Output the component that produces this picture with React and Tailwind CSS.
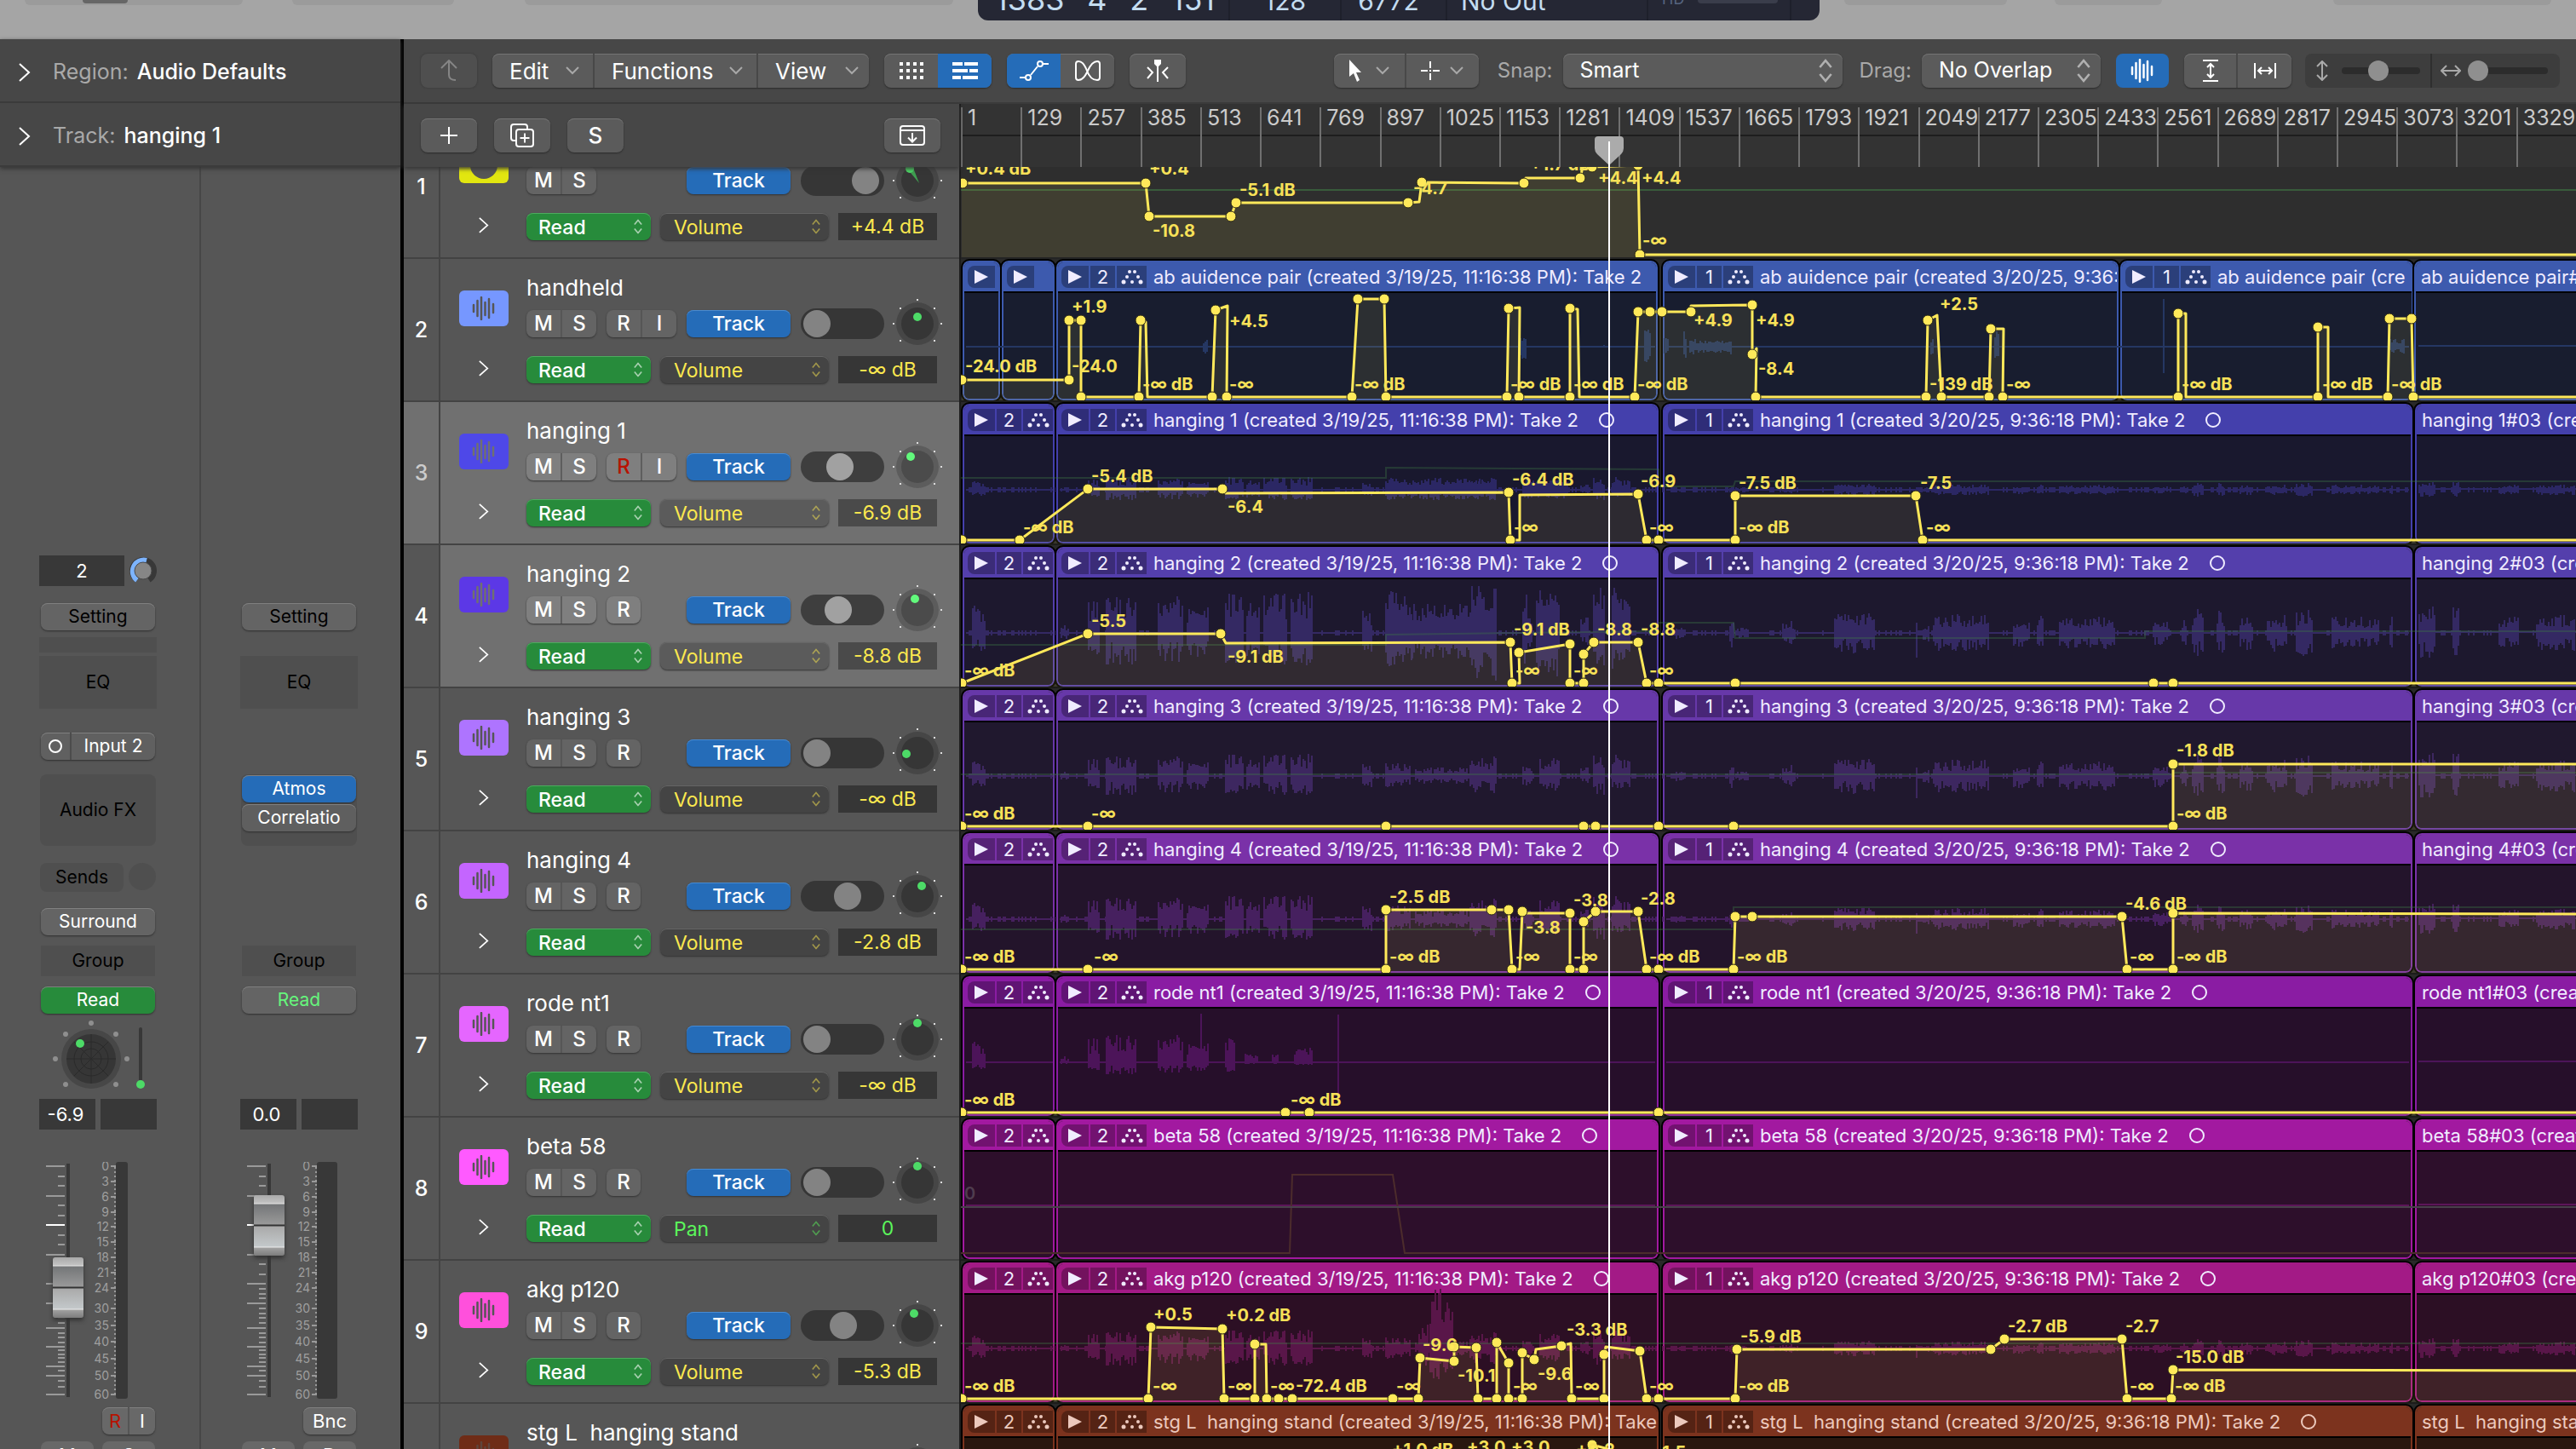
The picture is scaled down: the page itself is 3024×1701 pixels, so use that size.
import { useState } from "react";
import clsx from "clsx";

const RULER = Array.from({ length: 27 }, (_, i) => 1 + i * 128);

// [from, to, peak] of every passage that was played, in lane pixels
const BURSTS = [
  [14, 30, 0.7], [118, 128, 0.2], [150, 163, 0.8], [171, 206, 1], [232, 262, 0.9], [266, 292, 0.8],
  [311, 332, 1], [336, 352, 0.8], [356, 384, 1], [388, 414, 1.1], [472, 484, 0.6], [499, 528, 0.6],
  [534, 596, 0.4], [598, 629, 0.9], [660, 672, 0.5], [680, 704, 0.8], [728, 738, 0.4], [743, 757, 1],
  [765, 787, 1], [840, 852, 0.3], [903, 908, 0.8], [912, 926, 0.25], [965, 981, 0.6], [1026, 1074, 1],
  [1122, 1124, 1.4], [1130, 1138, 0.4], [1142, 1208, 0.9], [1236, 1256, 0.7], [1264, 1272, 1],
  [1290, 1355, 0.8], [1400, 1420, 0.6], [1434, 1440, 0.8], [1446, 1460, 1.2], [1475, 1484, 1.1],
  [1502, 1518, 0.9], [1534, 1558, 0.9], [1568, 1588, 1.2], [1610, 1666, 0.8], [1678, 1681, 0.8],
  [1712, 1732, 1.3], [1752, 1760, 1.5], [1806, 1830, 0.8], [1850, 1896, 0.9],
];

// points: [x, y] with a handle, [x, y, 0] without; labels: [x, baseline, text]
const TRACKS = [
  {
    num: 1, name: "", tile: "bg-[#e2e610]", icon: "master", buttons: "MS", fader: 95, pan: [-9, -14], wedge: true,
    param: "Volume", value: "+4.4 dB",
    points: [[2, 79], [217, 79], [221, 118], [317, 118], [323, 102], [525, 102], [538, 101, 0], [541, 78], [661, 79], [663, 73, 0], [727, 73], [730, 60, 0], [741, 60], [795, 58], [797, 163], [1896, 163, 0]],
    labels: [[5, 69, "+0.4 dB"], [221, 69, "+0.4"], [327, 94, "-5.1 dB"], [225, 142, "-10.8"], [531, 92, "-4.7"], [668, 64, "+1.7 dB"], [748, 80, "+4.4"], [799, 80, "+4.4"], [800, 153, "-∞"]],
    ghost: [[0, 87], [1896, 87]],
  },
  {
    num: 2, name: "handheld", tile: "bg-[#7697ff]", buttons: "MSRI", fader: 0, pan: [0, -8],
    param: "Volume", value: "-∞ dB",
    head: "bg-[#3d5aae]", edge: "border-[#3d5aae]", body: "bg-[#181d2f]", chip: "bg-[#2b3f7a]", wave: "#253763", scale: [0, 0, 0],
    title: "ab auidence pair",
    regions: [[2, 44, 0], [48, 62, 0], [112, 706, 2, "(created 3/19/25, 11:16:38 PM): Take 2"], [824, 535, 1, "(created 3/20/25, 9:36:18 PM): Take 2"], [1361, 344, 1, "(created 3/20/25, 9:36:18 PM): Take 2"], [1706, 220, 0, "#03 (created 3/20/25)"]],
    extra: [[285, 291, 8, 8], [657, 664, 12, 18], [755, 756, 3, 3], [803, 811, 26, 24], [826, 832, 12, 10], [849, 853, 20, 20], [856, 906, 9, 9], [1139, 1142, 10, 10], [1214, 1220, 24, 18], [1412, 1413, 56, 34], [1678, 1696, 10, 8]],
    points: [[1, 142], [127, 142], [127, 72], [141, 72], [141, 162], [209, 162], [211, 72], [217, 74, 0], [219, 162, 0], [295, 162], [299, 60], [313, 55, 0], [312, 162], [459, 162], [466, 47], [497, 47], [499, 162], [641, 162], [643, 58], [656, 57, 0], [655, 162], [715, 162], [715, 58], [724, 59, 0], [726, 162, 0], [791, 162], [795, 62], [809, 62], [823, 62], [857, 62], [857, 55, 0], [929, 54], [929, 112], [934, 105, 0], [933, 162], [1133, 162], [1135, 72], [1146, 66, 0], [1151, 162], [1207, 162], [1209, 82], [1224, 82, 0], [1223, 162], [1429, 162], [1429, 64], [1438, 64, 0], [1438, 162, 0], [1593, 162], [1593, 80], [1605, 80, 0], [1605, 162, 0], [1675, 162], [1677, 70], [1703, 70], [1705, 162], [1896, 162, 0]],
    labels: [[5, 133, "-24.0 dB"], [130, 63, "+1.9"], [130, 133, "-24.0"], [213, 154, "-∞ dB"], [315, 80, "+4.5"], [315, 154, "-∞"], [462, 154, "-∞ dB"], [645, 154, "-∞ dB"], [719, 154, "-∞ dB"], [794, 154, "-∞ dB"], [860, 79, "+4.9"], [933, 79, "+4.9"], [936, 136, "-8.4"], [1149, 60, "+2.5"], [1137, 154, "-139 dB"], [1227, 154, "-∞"], [1433, 154, "-∞ dB"], [1598, 154, "-∞ dB"], [1679, 154, "-∞ dB"]],
  },
  {
    num: 3, name: "hanging 1", tile: "bg-[#4e48e8]", buttons: "MSRI", armed: true, selected: true, focused: true, fader: 45, pan: [-8, -12],
    param: "Volume", value: "-6.9 dB",
    head: "bg-[#4440ac]", edge: "border-[#4440ac]", body: "bg-[#19182e]", chip: "bg-[#2f2d78]", wave: "#2b2764", scale: [15, 12, 7],
    extra: [[499, 628, 14, 12], [660, 714, 13, 10]],
    points: [[1, 162], [69, 162], [149, 102], [307, 102], [311, 107, 0], [643, 106], [645, 162], [656, 162, 0], [656, 109, 0], [795, 108], [805, 162], [819, 162], [909, 162], [909, 110], [1121, 110], [1129, 162], [1896, 162, 0]],
    labels: [[73, 154, "-∞ dB"], [153, 94, "-5.4 dB"], [313, 130, "-6.4"], [647, 98, "-6.4 dB"], [649, 154, "-∞"], [798, 100, "-6.9"], [808, 154, "-∞"], [913, 102, "-7.5 dB"], [913, 154, "-∞ dB"], [1126, 102, "-7.5"], [1133, 154, "-∞"]],
    ghost: [[0, 89], [499, 89], [499, 77], [819, 79], [819, 99], [907, 99], [909, 93], [1896, 93]],
  },
  {
    num: 4, name: "hanging 2", tile: "bg-[#5c38e6]", buttons: "MSR", selected: true, fader: 41, pan: [-3, -13],
    param: "Volume", value: "-8.8 dB",
    head: "bg-[#543fac]", edge: "border-[#543fac]", body: "bg-[#1d182e]", chip: "bg-[#3b2c78]", wave: "#342963", scale: [48, 38, 24],
    extra: [[499, 530, 50, 40], [530, 600, 34, 30], [600, 630, 58, 56], [660, 666, 50, 40], [676, 702, 54, 54], [743, 756, 56, 34], [765, 787, 58, 46]],
    points: [[1, 162], [149, 104], [305, 104], [311, 115, 0], [645, 114], [647, 162], [656, 162, 0], [655, 126], [715, 116], [715, 162], [731, 162], [731, 128], [743, 114], [795, 114], [805, 162], [819, 162], [909, 162], [1400, 162], [1423, 162], [1896, 162, 0]],
    labels: [[4, 154, "-∞ dB"], [153, 96, "-5.5"], [313, 138, "-9.1 dB"], [649, 106, "-9.1 dB"], [651, 154, "-∞"], [719, 154, "-∞"], [747, 106, "-8.8"], [798, 106, "-8.8"], [808, 154, "-∞"]],
    ghost: [[0, 117], [499, 117], [499, 105], [819, 101], [819, 91], [907, 91], [909, 109], [1390, 109], [1390, 101], [1896, 101]],
  },
  {
    num: 5, name: "hanging 3", tile: "bg-[#ae74ff]", buttons: "MSR", fader: 0, pan: [-13, 1],
    param: "Volume", value: "-∞ dB",
    head: "bg-[#6738a9]", edge: "border-[#6738a9]", body: "bg-[#20182e]", chip: "bg-[#482677]", wave: "#3d2760", scale: [26, 22, 21],
    points: [[1, 162], [149, 162], [499, 162], [731, 162], [745, 162], [819, 162], [907, 162], [1423, 162], [1423, 89], [1896, 89, 0]],
    labels: [[4, 154, "-∞ dB"], [153, 154, "-∞"], [1427, 80, "-1.8 dB"], [1427, 154, "-∞ dB"]],
    ghost: [[0, 101], [1423, 101], [1425, 99], [1896, 99]],
  },
  {
    num: 6, name: "hanging 4", tile: "bg-[#c465ff]", buttons: "MSR", fader: 60, pan: [5, -12],
    param: "Volume", value: "-2.8 dB",
    head: "bg-[#7a31a8]", edge: "border-[#7a31a8]", body: "bg-[#23142b]", chip: "bg-[#562276]", wave: "#46205f", scale: [28, 24, 14],
    points: [[1, 162], [149, 162], [499, 162], [499, 92], [623, 92], [643, 92], [647, 162], [656, 162, 0], [659, 94], [661, 96, 0], [715, 96], [715, 162], [731, 162], [731, 106], [745, 94], [795, 94], [805, 162], [819, 162], [907, 162], [909, 100], [929, 100], [1363, 100], [1369, 162], [1423, 162], [1423, 96], [1896, 97, 0]],
    labels: [[4, 154, "-∞ dB"], [156, 154, "-∞"], [503, 84, "-2.5 dB"], [503, 154, "-∞ dB"], [663, 120, "-3.8"], [651, 154, "-∞"], [719, 88, "-3.8"], [719, 154, "-∞"], [798, 86, "-2.8"], [808, 154, "-∞ dB"], [911, 154, "-∞ dB"], [1367, 92, "-4.6 dB"], [1372, 154, "-∞"], [1427, 154, "-∞ dB"]],
    ghost: [[0, 115], [907, 115], [907, 89], [1896, 89]],
  },
  {
    num: 7, name: "rode nt1", tile: "bg-[#e566ff]", buttons: "MSR", fader: 0, pan: [0, -19],
    param: "Volume", value: "-∞ dB",
    head: "bg-[#8a1ca3]", edge: "border-[#8a1ca3]", body: "bg-[#260f2a]", chip: "bg-[#601474]", wave: "#4c1459", scale: [36, 14, 0], until: 310,
    extra: [[282, 284, 62, 16], [311, 323, 30, 12], [334, 350, 10, 2], [366, 374, 10, 2], [392, 414, 18, 3], [443, 444, 62, 60]],
    points: [[1, 162], [381, 162], [409, 162], [819, 162], [1896, 162, 0]],
    labels: [[4, 154, "-∞ dB"], [387, 154, "-∞ dB"]],
  },
  {
    num: 8, name: "beta 58", tile: "bg-[#ff5aff]", buttons: "MSR", fader: 0, pan: [0, -19],
    param: "Pan", value: "0",
    head: "bg-[#a219a0]", edge: "border-[#a219a0]", body: "bg-[#2d0f2b]", chip: "bg-[#721270]", wave: "#5c1559", scale: [0, 0, 0],
    points: [], labels: [],
    dimValue: "0",
    dim: [[0, 159], [386, 159], [389, 67], [507, 67], [521, 159], [1896, 159]],
    ghost: [[0, 105], [1896, 105]],
  },
  {
    num: 9, name: "akg p120", tile: "bg-[#ff50dc]", buttons: "MSR", fader: 51, pan: [-4, -14],
    param: "Volume", value: "-5.3 dB",
    head: "bg-[#a31a86]", edge: "border-[#a31a86]", body: "bg-[#2c0f24]", chip: "bg-[#73125e]", wave: "#591649", scale: [22, 20, 9],
    extra: [[538, 550, 28, 20], [551, 578, 70, 36]],
    points: [[1, 162], [220, 162], [223, 78], [307, 80], [309, 162], [345, 162], [345, 98], [358, 98, 0], [359, 162], [373, 162], [389, 162], [507, 162], [537, 162], [539, 114], [579, 118], [579, 101], [605, 102], [607, 162], [629, 162], [629, 96], [643, 120], [643, 162], [659, 162], [659, 108], [673, 116], [675, 104, 0], [705, 100], [716, 97, 0], [717, 162], [755, 162], [755, 110], [757, 101, 0], [797, 106], [805, 162], [819, 162], [909, 162], [911, 104], [1209, 104], [1225, 92], [1363, 92], [1369, 162], [1421, 162], [1423, 128], [1896, 129, 0]],
    labels: [[4, 154, "-∞ dB"], [226, 70, "+0.5"], [225, 154, "-∞"], [311, 71, "+0.2 dB"], [313, 154, "-∞"], [363, 154, "-∞"], [393, 154, "-72.4 dB"], [511, 154, "-∞"], [542, 106, "-9.6"], [583, 142, "-10.1"], [648, 154, "-∞"], [677, 140, "-9.6"], [711, 88, "-3.3 dB"], [721, 154, "-∞"], [808, 154, "-∞"], [915, 96, "-5.9 dB"], [913, 154, "-∞ dB"], [1229, 84, "-2.7 dB"], [1367, 84, "-2.7"], [1372, 154, "-∞"], [1426, 120, "-15.0 dB"], [1425, 154, "-∞ dB"]],
    ghost: [[0, 97], [1896, 97]],
  },
  {
    num: 10, name: "stg L  hanging stand", tile: "bg-[#6f2c17]", buttons: "MSR", fader: 40, pan: [0, -14],
    param: "Volume", value: "-1.5 dB", muted: true,
    head: "bg-[#7c331e]", edge: "border-[#7c331e]", body: "bg-[#29170f]", chip: "bg-[#552314]", wave: "#4a2314", scale: [0, 0, 0],
    points: [[741, 48], [900, 90, 0]],
    labels: [[506, 61, "+1.0 dB"], [594, 58, "+3.0"], [646, 58, "+3.0"], [722, 61, "+0.2"], [814, 64, "-1.5"]],
  },
];

const REGIONS = [
  [2, 108, 2],
  [112, 707, 2, "(created 3/19/25, 11:16:38 PM): Take 2"],
  [824, 880, 1, "(created 3/20/25, 9:36:18 PM): Take 2"],
  [1707, 220, 0, "#03 (created 3/20/25)"],
];

const noise = (n) => {
  const v = Math.sin(n * 12.9898) * 43758.5453;
  return v - Math.floor(v);
};

const barPath = (track) => {
  let d = "";
  const bar = (x, up, down) => {
    d += `M${x} ${Math.round(103 - up)}V${Math.round(103 + down)}`;
  };
  const [up, down, late] = track.scale;
  BURSTS.forEach(([from, to, peak]) => {
    if (!up || (track.until && from > track.until)) return;
    for (let x = from; x < to; x += 2) {
      const a = from > 819 ? late : up;
      const b = from > 819 ? late : down;
      bar(x, a * peak * (0.3 + 0.7 * noise(x)), b * peak * (0.3 + 0.7 * noise(x + 7)));
    }
  });
  (track.extra || []).forEach(([from, to, a, b]) => {
    for (let x = from; x < to; x += 2) {
      bar(x, a * (0.4 + 0.6 * noise(x + 3)), b * (0.4 + 0.6 * noise(x + 5)));
    }
  });
  if (up && !track.until) {
    for (let x = 6; x < 1890; x += 2) if (noise(x * 3) > 0.7) bar(x, 3, 3);
  }
  return d;
};

const line = (pts) => pts.map(([x, y], i) => `${i ? "L" : "M"}${x} ${y}`).join("");

const btn = "rounded-lg bg-[#5b5b5b] shadow-[inset_0_1px_0_#747474,0_1px_2px_#2b2b2b]";

const UpDown = ({ className }) => (
  <svg viewBox="0 0 12 22" className={clsx("pointer-events-none absolute top-1/2 -translate-y-1/2", className)} fill="none" stroke="currentColor" strokeWidth="2">
    <path d="M1 8l5-6 5 6M1 14l5 6 5-6" />
  </svg>
);

const Down = () => (
  <svg viewBox="0 0 16 10" className="w-4 text-[#a8a8a8]" fill="none" stroke="currentColor" strokeWidth="2">
    <path d="M1 1l7 7 7-7" />
  </svg>
);

const Chevron = ({ className }) => (
  <svg viewBox="0 0 14 22" className={className} fill="none" stroke="currentColor" strokeWidth="2">
    <path d="M1 1l11 10L1 21" />
  </svg>
);

const WaveIcon = ({ className }) => (
  <svg viewBox="0 0 28 28" className={className} stroke="currentColor" strokeWidth="2.500" strokeLinecap="round">
    <path d="M2 10v8M6.500 5v18M11 1v26M15.500 7v15M20 3v22M25 9v10" />
  </svg>
);

const TopBar = () => (
  <div className="relative h-[46px] shrink-0 bg-[#a5a5a5]">
    <div className="flex h-6 items-start pl-[29px] pr-[29px]">
      <div className="h-[6px] w-[256px] rounded-b-lg bg-[#9b9b9b]">
        <div className="ml-[68px] h-1 w-[53px] rounded-b-md bg-[#666]" />
      </div>
      <div className="ml-[58px] h-[6px] w-[190px] rounded-b-lg bg-[#9b9b9b]" />
      <div className="ml-[83px] h-[6px] w-[503px] rounded-b-lg bg-[#9b9b9b]" />
      <div className="ml-[29px] flex h-6 w-[988px] items-end overflow-hidden rounded-b-xl bg-[#252734] text-[30px] leading-[30px] text-[#c3dcf0]">
        <div className="flex w-[296px] shrink-0 items-end justify-between border-r-2 border-[#1e202b] pb-2.5 pl-5 pr-4 text-4xl leading-[30px]">
          <span>1383</span>
          <span>4</span>
          <span>2</span>
          <span>151</span>
        </div>
        <div className="w-[131px] shrink-0 border-r-2 border-[#1e202b] pb-2 text-center">128</div>
        <div className="w-[124px] shrink-0 border-r-2 border-[#1e202b] pb-2 pr-3 text-center">6772</div>
        <div className="w-[236px] shrink-0 border-r-2 border-[#1e202b] pb-2 pl-4">No Out</div>
        <div className="flex w-[168px] shrink-0 items-end gap-4 border-r-2 border-[#1e202b] pb-[15px] pl-4 text-lg leading-5 text-[#566580]">
          <span>HD</span>
          <span className="mb-[5px] h-4 w-[94px] rounded-b bg-[#3a3d4b]" />
        </div>
      </div>
      <div className="ml-[29px] h-[6px] w-[191px] rounded-b-lg bg-[#9b9b9b]" />
      <div className="ml-[56px] h-[6px] w-[126px] rounded-b-lg bg-[#9b9b9b]" />
      <div className="ml-auto h-[6px] w-[256px] rounded-b-lg bg-[#9b9b9b]" />
    </div>
  </div>
);

const stripBtn = "h-8 w-[134px] rounded-lg text-[21px] leading-8 shadow-[inset_0_1px_0_#808080,0_1px_2px_#303030]";
const slot = "flex items-center justify-center bg-[#4f4f4f] text-[21px] text-black";

const LONG_TICKS = [5, 40, 109, 143, 166, 195, 217, 240, 251, 273];
const SHORT_TICKS = [17, 28, 51, 63, 86, 97, 120, 132, 149, 155, 160, 172, 178, 183, 189, 201, 206, 212, 221, 226, 230, 235, 245, 257, 264];
const SCALE = [[0, 5], [3, 23], [6, 41], [9, 59], [12, 76], [15, 94], [18, 112], [21, 130], [24, 148], [30, 172], [35, 192], [40, 211], [45, 231], [50, 251], [60, 273]];

const Fader = ({ value, meter, label }) => (
  <div className="relative h-[278px] w-[138px]">
    <svg viewBox="0 0 138 278" className="h-full w-full" fill="none" stroke="#9a9a9a" strokeWidth="2">
      <path d={LONG_TICKS.map((y) => `M8 ${y}H30`).join("") + SHORT_TICKS.map((y) => `M22 ${y}H30`).join("")} />
      <path d="M8 74H30" stroke="#fff" />
      <path d={SCALE.map(([, y]) => `M84 ${y}H90`).join("")} />
      <path d="M89 6V273" strokeDasharray="2 3" />
      <path d="M34 2V276" stroke="#383838" strokeWidth="4" />
      <rect x="90" y="0" width={meter} height="278" rx="3" fill="#383838" stroke="none" />
      {SCALE.map(([n, y]) => (
        <text key={n} x="82" y={y + 5} textAnchor="end" fill="#9f9f9f" stroke="none" fontSize="14">
          {n}
        </text>
      ))}
    </svg>
    <input
      type="range"
      aria-label={label}
      defaultValue={value}
      className="absolute left-4 top-0 h-[278px] w-9 appearance-none bg-transparent [direction:rtl] [writing-mode:vertical-lr] [&::-webkit-slider-thumb]:h-[71px] [&::-webkit-slider-thumb]:w-9 [&::-webkit-slider-thumb]:appearance-none [&::-webkit-slider-thumb]:rounded-[3px] [&::-webkit-slider-thumb]:bg-[linear-gradient(#a9a9a9_0,#c2c2c2_9px,#e6e6e6_10px,#747678_11px,#999_34px,#333_35px,#333_36px,#aaa_37px,#c3c8ca_60px,#eee_61px,#a0a0a0_62px,#7c7c7c_71px)] [&::-webkit-slider-thumb]:shadow-[0_3px_5px_#333]"
    />
  </div>
);

const ValueBoxes = ({ value, label }) => (
  <div className="mt-3 flex w-[138px] justify-between">
    <input aria-label={label} defaultValue={value} className="h-9 w-[66px] bg-[#383838] pr-1 text-center text-[22px] text-white" />
    <div className="h-9 w-[66px] bg-[#383838]" />
  </div>
);

const Inspector = () => (
  <aside className="flex w-[474px] shrink-0 flex-col border-r-4 border-black bg-[#565656]">
    <div className="relative z-10 shrink-0 bg-[#474747] shadow-[0_2px_5px_#333]">
      {[["Region:", "Audio Defaults"], ["Track:", "hanging 1"]].map(([k, v]) => (
        <div key={k} className="flex h-[75px] items-center gap-2.5 border-b-2 border-[#3b3b3b] pl-[22px] pt-1 text-[25px] text-white">
          <button type="button" aria-label={k} className="mr-4">
            <Chevron className="w-3.5" />
          </button>
          <span className="text-[#a9a9a9]">{k}</span>
          <span className="font-medium">{v}</span>
        </div>
      ))}
    </div>
    <div className="flex min-h-0 flex-1 overflow-hidden">
      <div className="flex w-[236px] flex-col items-center border-r-2 border-[#474747] pr-1 pt-[456px] *:shrink-0">
        <div className="flex w-[138px] items-center justify-between">
          <input aria-label="Channel" defaultValue="2" className="h-9 w-[100px] bg-[#383838] text-center text-[22px] text-white" />
          <svg viewBox="0 0 32 32" className="w-8" fill="none">
            <path d="M9 27A13 13 0 1 1 23 27" stroke="#383838" strokeWidth="6" />
            <path d="M9 27A13 13 0 0 1 20 4" stroke="#7db4ff" strokeWidth="6" />
            <circle cx="16" cy="16" r="10" fill="#868686" stroke="#4a4a4a" />
          </svg>
        </div>
        <button type="button" className={clsx(stripBtn, "mt-5 bg-[#646464] text-black")}>Setting</button>
        <div className="mt-2 h-[18px] w-[138px] bg-[#4f4f4f]" />
        <div className={clsx(slot, "mt-1 h-[62px] w-[138px]")}>EQ</div>
        <div className={clsx(stripBtn, "mt-7 flex items-center bg-[#606060] text-white")}>
          <button type="button" aria-label="Input format" className="flex h-8 w-9 items-center justify-center border-r-2 border-[#4c4c4c]">
            <span className="h-4 w-4 rounded-full border-2 border-white" />
          </button>
          <button type="button" className="flex-1">Input 2</button>
        </div>
        <div className={clsx(slot, "mt-[17px] h-[84px] w-[136px] rounded-lg")}>Audio FX</div>
        <div className="mt-5 flex h-[34px] w-[136px] justify-between">
          <div className={clsx(slot, "w-[98px] rounded-lg")}>Sends</div>
          <div className="h-8 w-8 rounded-full bg-[#4f4f4f]" />
        </div>
        <button type="button" className={clsx(stripBtn, "mt-[19px] bg-[#646464] text-white")}>Surround</button>
        <div className={clsx(slot, "mt-3 h-9 w-[134px]")}>Group</div>
        <button type="button" className={clsx(stripBtn, "mt-3 bg-[#278b3b] text-white")}>Read</button>
        <svg viewBox="0 0 138 88" className="h-[88px] w-[138px]" fill="none">
          {[[61, 11], [31, 24], [90, 24], [19, 53], [103, 53], [31, 83], [90, 83]].map(([x, y]) => (
            <circle key={`${x}-${y}`} cx={x} cy={y} r="3" fill="#8f8f8f" />
          ))}
          <circle cx="61" cy="53" r="35" fill="#474747" />
          <circle cx="61" cy="53" r="29" fill="#363636" />
          <path d="M32 53H90M61 24V82M41 33L81 73M81 33L41 73" stroke="#2a2a2a" />
          <circle cx="61" cy="53" r="20" stroke="#2a2a2a" />
          <circle cx="61" cy="53" r="12" stroke="#2a2a2a" />
          <circle cx="48" cy="35" r="5" fill="#4ddb67" />
          <path d="M119 18V82" stroke="#383838" strokeWidth="4" strokeLinecap="round" />
          <circle cx="119" cy="83" r="5" fill="#4ddb67" />
        </svg>
        <ValueBoxes value="-6.9" label="Level" />
        <div className="mt-[38px]">
          <Fader value={46} meter={14} label="Track level" />
        </div>
        <div className="mt-2.5 flex w-[134px] justify-end">
          <div className="flex h-8 w-[62px] rounded-lg bg-[#686868] text-[22px] shadow-[inset_0_1px_0_#808080,0_1px_2px_#303030]">
            <button type="button" className="flex-1 border-r-2 border-[#555] text-[#b81200]">R</button>
            <button type="button" className="flex-1 text-white">I</button>
          </div>
        </div>
        <div className="mt-2 flex w-[134px] justify-between text-[22px] text-white">
          <button type="button" className="h-8 w-[62px] rounded-lg bg-[#686868]">M</button>
          <button type="button" className="h-8 w-[62px] rounded-lg bg-[#686868]">S</button>
        </div>
      </div>

      <div className="flex flex-1 flex-col items-center pr-1 pt-[512px] *:shrink-0">
        <button type="button" className={clsx(stripBtn, "bg-[#646464] text-black")}>Setting</button>
        <div className={clsx(slot, "mt-[30px] h-[62px] w-[138px]")}>EQ</div>
        <div className="mt-[77px] flex h-[84px] w-[136px] flex-col items-center gap-0.5 rounded-lg bg-[#4f4f4f] pt-px">
          <button type="button" className={clsx(stripBtn, "bg-[#256cb8] text-white")}>Atmos</button>
          <button type="button" className={clsx(stripBtn, "bg-[#5f5f5f] text-white")}>Correlatio</button>
        </div>
        <div className={clsx(slot, "mt-[117px] h-9 w-[134px]")}>Group</div>
        <button type="button" className={clsx(stripBtn, "mt-3 bg-[#646464] text-[#66f57c]")}>Read</button>
        <div className="mt-[88px]">
          <ValueBoxes value="0.0" label="Output level" />
        </div>
        <div className="mt-[38px]">
          <Fader value={81} meter={24} label="Output fader" />
        </div>
        <div className="mt-2.5 flex w-[134px] justify-end">
          <button type="button" className="h-8 w-[62px] rounded-lg bg-[#686868] text-[22px] leading-8 text-white shadow-[inset_0_1px_0_#808080,0_1px_2px_#303030]">Bnc</button>
        </div>
        <div className="mt-2 flex w-[134px] justify-between text-[22px] text-white">
          <button type="button" className="h-8 w-[62px] rounded-lg bg-[#686868]">M</button>
          <button type="button" className="h-8 w-[62px] rounded-lg bg-[#686868]">D</button>
        </div>
      </div>
    </div>
  </aside>
);

const zoomSlider =
  "h-2 appearance-none rounded-full bg-[#2c2c2c] [&::-webkit-slider-thumb]:h-6 [&::-webkit-slider-thumb]:w-6 [&::-webkit-slider-thumb]:appearance-none [&::-webkit-slider-thumb]:rounded-full [&::-webkit-slider-thumb]:bg-[#8f8f8f]";

const Toolbar = () => {
  const [view, setView] = useState("tracks");

  return (
    <div className="flex h-[76px] shrink-0 items-center border-b-2 border-[#3b3b3b] bg-[#474747] pl-5 pr-[19px] text-[26px] text-white">
      <button type="button" aria-label="Up" className="flex h-10 w-[66px] items-center justify-center rounded-lg bg-[#4f4f4f] text-[#858585] shadow-[0_0_2px_#333]">
        <svg viewBox="0 0 22 26" className="w-[22px]" fill="none" stroke="currentColor" strokeWidth="2">
          <path d="M2 10l9-9 9 9M11 1v17q0 6 8 6" />
        </svg>
      </button>
      <div className={clsx(btn, "ml-[18px] flex h-10 divide-x-2 divide-[#484848]")}>
        <button type="button" className="flex w-[120px] items-center justify-between pl-5 pr-4">Edit<Down /></button>
        <button type="button" className="flex w-[192px] items-center justify-between pl-5 pr-4">Functions<Down /></button>
        <button type="button" className="flex w-[130px] items-center justify-between pl-5 pr-3">View<Down /></button>
      </div>
      <div className={clsx(btn, "ml-[18px] flex h-10 overflow-hidden")}>
        <button type="button" aria-label="Grid" onClick={() => setView("grid")} className={clsx("flex w-[63px] items-center justify-center", view === "grid" && "bg-[#256cb8]")}>
          <svg viewBox="0 0 28 20" className="w-7" fill="currentColor">
            {[0, 8, 16].map((y) => [0, 8, 16, 24].map((x) => <rect key={`${x}-${y}`} x={x} y={y} width="4" height="4" />))}
          </svg>
        </button>
        <button type="button" aria-label="Tracks" onClick={() => setView("tracks")} className={clsx("flex w-[63px] items-center justify-center", view === "tracks" && "bg-[#256cb8]")}>
          <svg viewBox="0 0 30 20" className="w-[30px]" stroke="currentColor" strokeWidth="4">
            <path d="M0 2H12M14 2H30M0 10H18M20 10H30M0 18H10M12 18H30" />
          </svg>
        </button>
      </div>
      <div className={clsx(btn, "ml-[18px] flex h-10 overflow-hidden")}>
        <button type="button" aria-label="Automation" className="flex w-[63px] items-center justify-center bg-[#256cb8]">
          <svg viewBox="0 0 34 24" className="w-[34px]" fill="none" stroke="currentColor" strokeWidth="2">
            <path d="M0 20H7M13 17L21 7M27 4H34" />
            <circle cx="10" cy="20" r="3" />
            <circle cx="24" cy="4" r="3" />
          </svg>
        </button>
        <button type="button" aria-label="Flex" className="flex w-[63px] items-center justify-center">
          <svg viewBox="0 0 30 24" className="w-[30px]" fill="none" stroke="currentColor" strokeWidth="2">
            <path d="M1 4Q1 1 4 1Q10 1 14 12T26 23Q29 23 29 20V4Q29 1 26 1Q20 1 15 12T4 23Q1 23 1 20Z" />
          </svg>
        </button>
      </div>
      <button type="button" aria-label="Catch" className={clsx(btn, "ml-[18px] flex h-10 w-[66px] items-center justify-center")}>
        <svg viewBox="0 0 26 26" className="w-[26px]" fill="none" stroke="currentColor" strokeWidth="2">
          <path d="M9 0h8v5l-4 4-4-4z" fill="currentColor" stroke="none" />
          <path d="M13 6V26M1 9l6 6-6 7M25 9l-6 6 6 7" />
        </svg>
      </button>

      <div className={clsx(btn, "ml-auto flex h-10 divide-x-2 divide-[#484848]")}>
        <button type="button" aria-label="Pointer" className="flex w-[85px] items-center justify-center gap-4">
          <svg viewBox="0 0 16 26" className="w-4" fill="currentColor">
            <path d="M1 0L15 15H9L13 24L10 26L6 16L1 20Z" />
          </svg>
          <Down />
        </button>
        <button type="button" aria-label="Marquee" className="flex w-[85px] items-center justify-center gap-3">
          <svg viewBox="0 0 22 22" className="w-[22px]" stroke="currentColor" strokeWidth="2">
            <path d="M11 0V8M11 10V12M11 14V22M0 11H8M14 11H22" />
          </svg>
          <Down />
        </button>
      </div>
      <label htmlFor="snap" className="ml-[22px] mr-3 text-2xl text-[#a9a9a9]">Snap:</label>
      <div className="relative w-[328px]">
        <select id="snap" className={clsx(btn, "block h-10 w-full appearance-none px-5 text-[25px]")}>
          <option>Smart</option>
        </select>
        <UpDown className="right-3 w-4 text-[#b0b0b0]" />
      </div>
      <label htmlFor="drag" className="ml-5 mr-3 text-2xl text-[#a9a9a9]">Drag:</label>
      <div className="relative w-[210px]">
        <select id="drag" className={clsx(btn, "block h-10 w-full appearance-none px-5 text-[25px]")}>
          <option>No Overlap</option>
        </select>
        <UpDown className="right-3 w-4 text-[#b0b0b0]" />
      </div>
      <button type="button" aria-label="Waveform zoom" className="ml-[18px] flex h-10 w-[62px] items-center justify-center rounded-lg bg-[#256cb8]">
        <WaveIcon className="w-7" />
      </button>
      <div className={clsx(btn, "ml-[18px] flex h-10 divide-x-2 divide-[#484848]")}>
        <button type="button" aria-label="Fit vertically" className="flex w-[63px] items-center justify-center">
          <svg viewBox="0 0 20 26" className="w-5" fill="none" stroke="currentColor" strokeWidth="2">
            <path d="M1 1H19M1 25H19M10 5V21M6 9l4-4 4 4M6 17l4 4 4-4" />
          </svg>
        </button>
        <button type="button" aria-label="Fit horizontally" className="flex w-[63px] items-center justify-center">
          <svg viewBox="0 0 26 20" className="w-[26px]" fill="none" stroke="currentColor" strokeWidth="2">
            <path d="M1 1V19M25 1V19M5 10H21M9 6l-4 4 4 4M17 6l4 4-4 4" />
          </svg>
        </button>
      </div>
      <div className="ml-4 flex h-10 w-[299px] items-center rounded-lg bg-[#3d3d3d] text-[#a9a9a9]">
        <svg viewBox="0 0 14 24" className="ml-[13px] w-3.5" fill="none" stroke="currentColor" strokeWidth="2">
          <path d="M7 1V23M1 7l6-6 6 6M1 17l6 6 6-6" />
        </svg>
        <input type="range" aria-label="Vertical zoom" defaultValue={45} className={clsx(zoomSlider, "ml-4 w-[92px]")} />
        <span className="ml-3 h-10 w-0.5 bg-[#2f2f2f]" />
        <svg viewBox="0 0 24 14" className="ml-2.5 w-6" fill="none" stroke="currentColor" strokeWidth="2">
          <path d="M1 7H23M7 1L1 7l6 6M17 1l6 6-6 6" />
        </svg>
        <input type="range" aria-label="Horizontal zoom" defaultValue={0} className={clsx(zoomSlider, "ml-2 w-[94px]")} />
      </div>
    </div>
  );
};

const TrackHeader = ({ track }) => {
  const { num, name, tile, icon, buttons, armed, selected, focused, fader, pan, wedge, param, value, muted } = track;
  const small = selected ? "bg-[#7f7f7f]" : "bg-[#646464]";
  const tone = param === "Pan" ? "text-[#5bf55b]" : "text-[#fbe84f]";

  return (
    <div className={clsx("flex h-[168px] border-b-2 border-[#434343]", selected ? "bg-[#707070]" : "bg-[#565656]")}>
      <div className={clsx("flex w-[43px] shrink-0 items-center justify-center border-r-2 border-[#434343] pt-0.5 text-[25px] font-medium", focused ? "text-[#ccc]" : "bg-[#565656] text-white")}>
        {num < 10 && num}
      </div>
      <div className="flex w-[101px] shrink-0 flex-col items-center pt-[37px]">
        <div className={clsx("flex h-[42px] w-[58px] items-center justify-center rounded-md", tile, selected ? "text-[#707070]" : "text-[#565656]")}>
          {icon === "master" ? <span className="h-8 w-8 rounded-full bg-[#565656]" /> : <WaveIcon className={clsx("w-7", muted && "opacity-60")} />}
        </div>
        <button type="button" aria-label="Show lanes" className="mt-10 text-white">
          <Chevron className="w-3" />
        </button>
      </div>
      <div className="flex-1 pt-4">
        <div className="h-11 whitespace-pre text-[26px] leading-9 text-white">{name}</div>
        <div className="flex h-8 items-center text-2xl font-medium text-white">
          <div className="flex w-[188px] gap-3">
            <div className={clsx("flex h-8 w-[82px] rounded-lg shadow-[0_1px_2px_#333]", small)}>
              <button type="button" className="flex-1 border-r-2 border-[#505050]/70">M</button>
              <button type="button" className="flex-1">S</button>
            </div>
            {buttons.includes("R") && (
              <div className={clsx("flex h-8 rounded-lg shadow-[0_1px_2px_#333]", small)}>
                <button type="button" className={clsx("w-10", armed && "text-[#b81200]")}>R</button>
                {buttons.includes("I") && <button type="button" className="w-[42px] border-l-2 border-[#505050]/70">I</button>}
              </div>
            )}
          </div>
          <button type="button" className="h-8 w-[122px] rounded-lg bg-[#256cb8] text-[23px] leading-8 shadow-[inset_0_1px_0_#4a8bd0,0_1px_2px_#333]">Track</button>
          <input
            type="range"
            aria-label={`Level of track ${num}`}
            defaultValue={fader}
            className={clsx(
              "ml-3 h-9 w-[98px] appearance-none rounded-full px-[3px] [&::-webkit-slider-thumb]:h-8 [&::-webkit-slider-thumb]:w-8 [&::-webkit-slider-thumb]:appearance-none [&::-webkit-slider-thumb]:rounded-full",
              selected ? "bg-[#3e3e3e] [&::-webkit-slider-thumb]:bg-[#a1a1a1]" : "bg-[#363636] [&::-webkit-slider-thumb]:bg-[#838383]"
            )}
          />
          <svg viewBox="-30 -30 60 60" className="-my-4 ml-[9px] w-[60px]">
            {[[0, -28], [-20, -18], [20, -18], [-28, 0], [28, 0], [-20, 20], [20, 20]].map(([x, y]) => (
              <rect key={`${x} ${y}`} x={x - 1} y={y - 1} width="2" height="2" fill="#ddd" />
            ))}
            <circle r="25" fill={selected ? "#5c5c5c" : "#464646"} />
            <circle r="19" fill={selected ? "#4b4b4b" : "#363636"} />
            {wedge && <path d={`M${pan[0] - 3} ${pan[1]}L2 3L${pan[0] + 4} ${pan[1] - 1}Z`} fill="#3f9e50" />}
            <circle cx={pan[0]} cy={pan[1]} r="5" fill={selected ? "#62f97c" : "#4ddb67"} />
          </svg>
        </div>
        <div className="mt-[22px] flex items-center text-[23px]">
          <div className="relative w-[146px]">
            <select aria-label={`Automation mode of track ${num}`} className="block h-8 w-full appearance-none rounded-lg bg-[#278b3b] px-3.5 font-medium text-white shadow-[inset_0_1px_0_#4faa60,0_1px_2px_#333]">
              <option>Read</option>
            </select>
            <UpDown className="right-2.5 w-2.5 text-white/60" />
          </div>
          <div className={clsx("relative ml-[11px] w-[198px]", tone)}>
            <select aria-label={`Automation parameter of track ${num}`} className={clsx("block h-8 w-full appearance-none rounded-lg px-4 shadow-[inset_0_1px_0_#666,0_1px_2px_#333]", selected ? "bg-[#5b5b5b]" : "bg-[#444]")}>
              <option>{param}</option>
            </select>
            <UpDown className="right-2.5 w-2.5 opacity-50" />
          </div>
          <input aria-label={`Value of track ${num}`} defaultValue={value} className={clsx("ml-[11px] h-8 w-[116px] text-center", tone, selected ? "bg-[#4a4a4a]" : "bg-[#363636]")} />
        </div>
      </div>
    </div>
  );
};

const TakeDots = () => (
  <svg viewBox="0 0 26 18" className="w-[26px]" fill="currentColor">
    <circle cx="10" cy="3" r="2" />
    <circle cx="16" cy="3" r="2" />
    <circle cx="7" cy="9" r="2" />
    <circle cx="20" cy="9" r="2" />
    <circle cx="3" cy="15" r="2.500" />
    <circle cx="13" cy="15" r="2" />
    <circle cx="23" cy="15" r="2.500" />
  </svg>
);

const Region = ({ track, region }) => {
  const [left, width, take, text] = region;
  const { head, edge, body, chip, muted } = track;
  const title = track.title || track.name;
  const tail = text && text.startsWith("#");

  return (
    <div className={clsx("absolute top-0.5 flex h-[164px] flex-col overflow-hidden rounded-lg border-2 outline-2 outline-black", edge)} style={{ left, width }}>
      <div className={clsx("flex h-[34px] shrink-0 items-center gap-0.5 pl-1 text-[22px]", head, muted ? "text-[#ecc9bd]" : "text-[#f0ecff]")}>
        {!tail && (
          <span className={clsx("flex h-[26px] w-8 shrink-0 items-center justify-center rounded-l-lg", chip)}>
            <svg viewBox="0 0 16 16" className="w-4" fill="currentColor">
              <path d="M0 0L16 8L0 16Z" />
            </svg>
          </span>
        )}
        {take > 0 && (
          <>
            <span className={clsx("flex h-[26px] w-[29px] shrink-0 items-center justify-center", chip)}>{take}</span>
            <span className={clsx("flex h-[26px] w-[35px] shrink-0 items-center justify-center", chip)}>
              <TakeDots />
            </span>
          </>
        )}
        {/* breaks between letters, so a name that does not fit ends on a whole one */}
        {text && (
          <span className={clsx("-mr-1 h-[34px] min-w-0 overflow-hidden whitespace-pre-wrap break-all leading-[34px]", tail ? "ml-0.5" : "ml-1.5")}>
            {tail ? `${title}${text}` : `${title} ${text}`}
            {!tail && <span className="-mb-px ml-6 inline-block h-[18px] w-[18px] rounded-full border-2" />}
          </span>
        )}
      </div>
      <div className={clsx("flex-1 border-t-2 border-black", body)} />
    </div>
  );
};

const Lane = ({ track }) => {
  const { head, points, labels, ghost, dim, dimValue, wave } = track;
  const d = line(points);

  return (
    <div className={clsx("relative h-[168px] overflow-hidden border-b-2", head ? "border-[#1c1c1a] bg-[#292929]" : "border-[#242424] bg-[#2e2e2e]")}>
      {head && (track.regions || REGIONS).map((r) => <Region key={r[0]} track={track} region={r} />)}
      <svg width="1896" height="168" className="absolute left-0 top-0">
        {head && !track.muted && <path d={`M6 103H108M116 103H815M828 103H1700M1711 102H1896${barPath(track)}`} stroke={wave} strokeWidth="2" fill="none" />}
        {dim && <path d={line(dim)} stroke="#4c2c2c" strokeWidth="2" fill="none" />}
        {ghost && <path d={line(ghost)} stroke={dim ? "#48414a" : "#3f7a45"} strokeOpacity={dim ? 1 : head ? 0.35 : 0.6} strokeWidth="2" fill="none" />}
        {dimValue && <text x="4" y="96" fontSize="20" fontWeight="600" fill="#4f3d4f">{dimValue}</text>}
        {points.length > 2 && <path d={`${d}V166H1V${points[0][1]}Z`} fill="#ffe95a" fillOpacity="0.09" />}
        <path d={d} stroke="#ffe95a" strokeWidth="3" strokeLinejoin="round" fill="none" />
        {points.map(([x, y, dot], i) => dot !== 0 && <circle key={i} cx={x} cy={y} r="6" fill="#ffe95a" stroke="#2b2815" strokeWidth="1" />)}
        {labels.map(([x, y, t]) => (
          <text key={`${x}-${y}`} x={x} y={y} fontSize="20" fontWeight="700" fill="#f7e158">{t}</text>
        ))}
      </svg>
    </div>
  );
};

const Ruler = () => (
  <div className="relative h-[74px] shrink-0 overflow-hidden bg-[#333] text-[25px] text-[#cbcbcb]">
    <div className="absolute inset-x-0 top-9 h-0.5 bg-[#1e1e1e]" />
    <div className="relative flex h-full pt-1">
      {RULER.map((bar) => (
        <div key={bar} className="flex-1 basis-0 border-l-2 border-[#707070] pl-1.5 leading-6">
          <span className="block w-0 whitespace-nowrap">{bar}</span>
        </div>
      ))}
    </div>
  </div>
);

const App = () => {
  return (
    <div className="flex h-screen flex-col overflow-hidden bg-[#2e2e2e] font-['Inter','Liberation_Sans',sans-serif]">
      <TopBar />
      <div className="flex min-h-0 flex-1">
        <Inspector />
        <main className="flex min-w-0 flex-1 flex-col">
          <Toolbar />
          <div className="flex min-h-0 flex-1">
            <section className="flex w-[654px] shrink-0 flex-col border-r-2 border-[#1d1d1d]">
              <div className="relative z-10 flex h-[74px] shrink-0 items-center gap-5 bg-[#474747] pl-5 pr-[22px] text-white shadow-[0_2px_5px_#333]">
                <button type="button" aria-label="Add track" className={clsx(btn, "flex h-10 w-[66px] items-center justify-center")}>
                  <svg viewBox="0 0 20 20" className="w-5" stroke="currentColor" strokeWidth="2">
                    <path d="M10 0V20M0 10H20" />
                  </svg>
                </button>
                <button type="button" aria-label="Duplicate track" className={clsx(btn, "flex h-10 w-[66px] items-center justify-center")}>
                  <svg viewBox="0 0 28 28" className="w-7" fill="none" stroke="currentColor" strokeWidth="2">
                    <path d="M7 20H4Q1 20 1 17V4Q1 1 4 1H17Q20 1 20 4V7" />
                    <rect x="7" y="7" width="20" height="20" rx="3" />
                    <path d="M17 11.500V22.500M11.500 17H22.500" />
                  </svg>
                </button>
                <button type="button" className={clsx(btn, "h-10 w-[66px] text-[26px] font-medium leading-10")}>S</button>
                <button type="button" aria-label="Hide" className={clsx(btn, "ml-auto flex h-10 w-[66px] items-center justify-center")}>
                  <svg viewBox="0 0 30 24" className="w-[30px]" fill="none" stroke="currentColor" strokeWidth="2">
                    <rect x="1" y="1" width="28" height="22" rx="3" />
                    <path d="M1 6H29M15 9V19M10 14.500l5 5 5-5" />
                  </svg>
                </button>
              </div>
              <div className="min-h-0 flex-1 overflow-hidden">
                <div className="-mt-[60px]">
                  {TRACKS.map((t) => <TrackHeader key={t.num} track={t} />)}
                </div>
              </div>
            </section>
            <section className="relative flex min-w-0 flex-1 flex-col overflow-hidden">
              <Ruler />
              <div className="min-h-0 flex-1 overflow-hidden">
                <div className="-mt-[60px]">
                  {TRACKS.map((t) => <Lane key={t.num} track={t} />)}
                </div>
              </div>
              <div className="absolute bottom-0 left-[744px] top-[38px] flex w-[34px] flex-col items-center">
                <svg viewBox="0 0 34 34" className="w-[34px] shrink-0">
                  <path d="M4 0H30Q34 0 34 4V14Q34 18 31 21L17 34L3 21Q0 18 0 14V4Q0 0 4 0Z" fill="#ababab" />
                  <path d="M17 6V34" stroke="#fff" strokeWidth="2" />
                </svg>
                <span className="w-0.5 flex-1 bg-white" />
              </div>
            </section>
          </div>
        </main>
      </div>
    </div>
  );
};

export default App;
